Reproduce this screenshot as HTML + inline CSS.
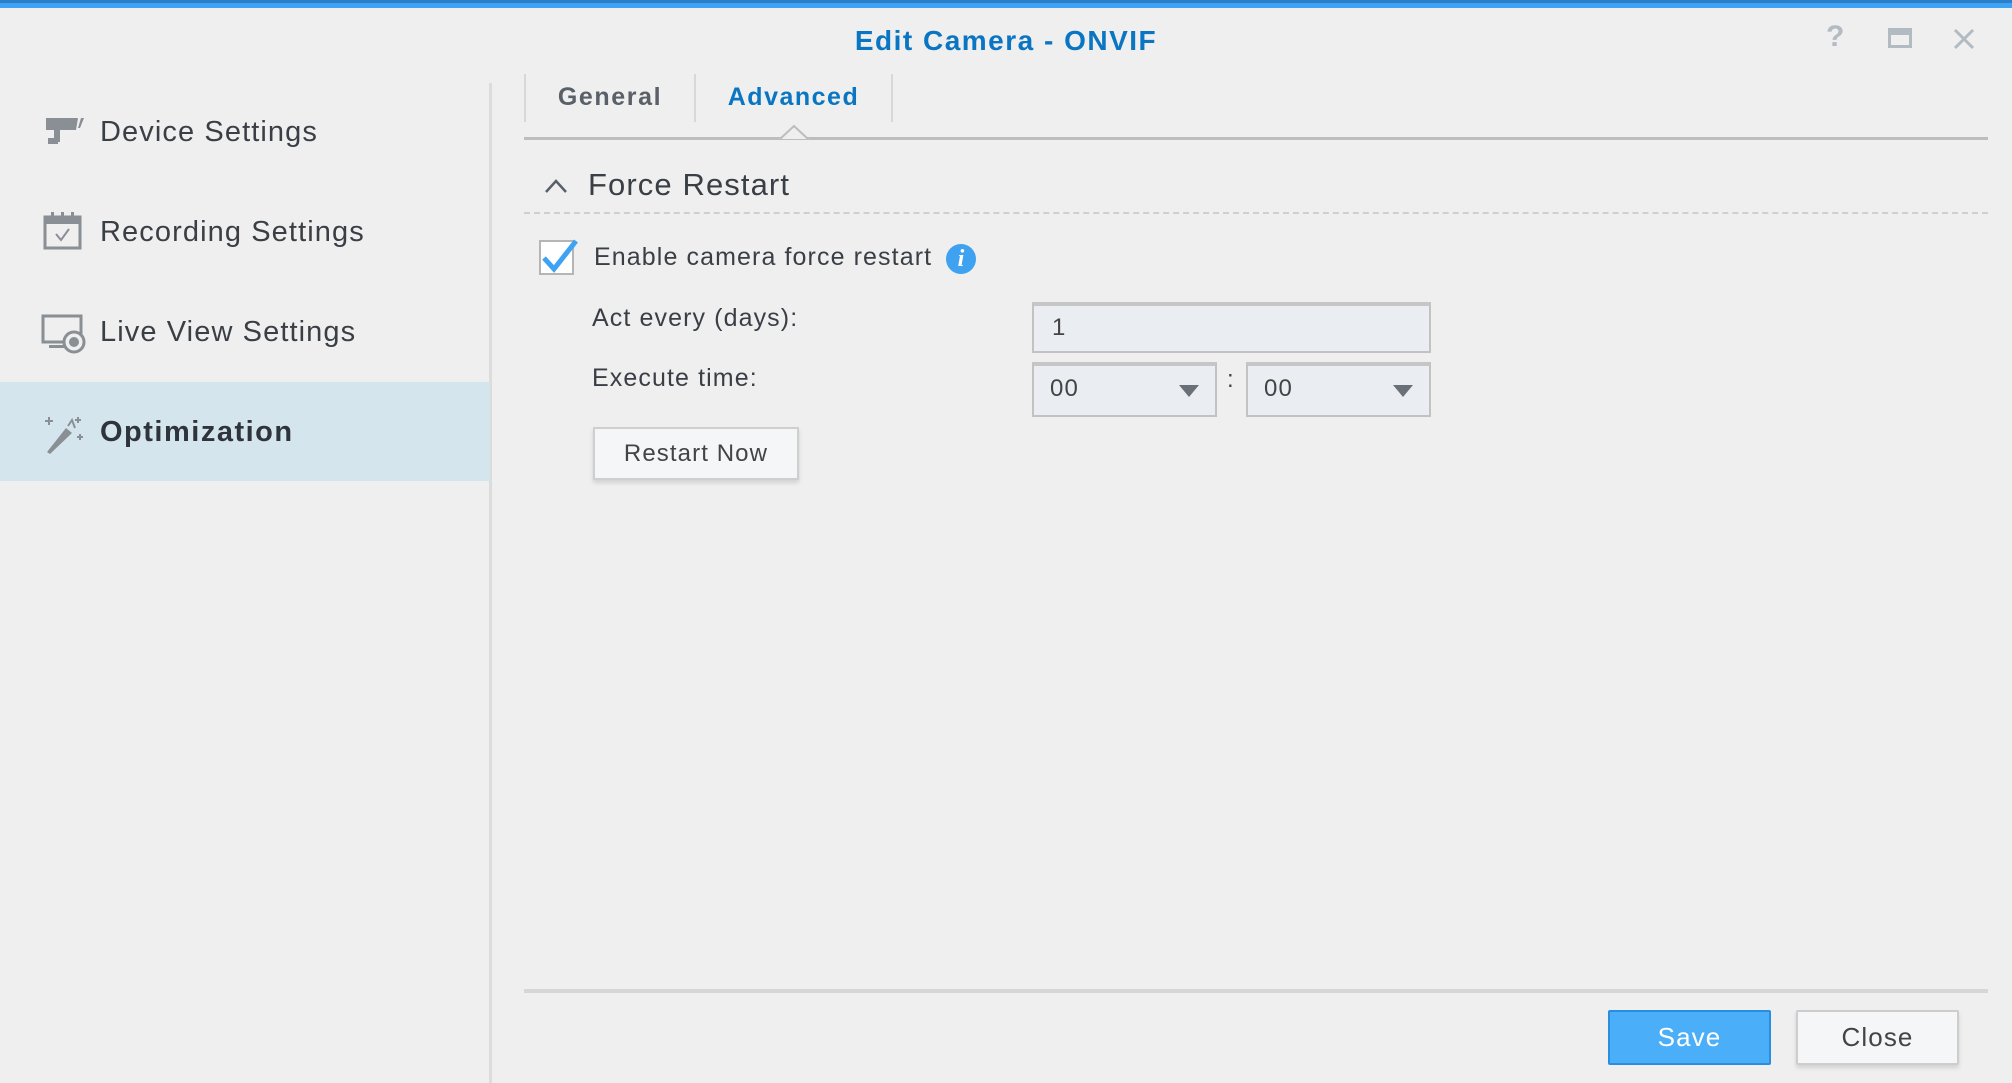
<!DOCTYPE html>
<html><head><meta charset="utf-8"><style>
*{margin:0;padding:0;box-sizing:border-box}
body{width:2012px;height:1082px;background:#efefef;font-family:"Liberation Sans",sans-serif;position:relative;overflow:hidden;color:#3a3f45;letter-spacing:1.1px}
.a{position:absolute;white-space:nowrap}
.side{font-size:29px;color:#3a3f45;line-height:34px}
</style></head><body>
<div class="a" style="left:0;top:0;width:2012px;height:3px;background:#2a7fc8"></div>
<div class="a" style="left:0;top:3px;width:2012px;height:5px;background:#3ea2f5"></div>
<div class="a" style="left:0;top:24px;width:2012px;text-align:center;font-size:28px;font-weight:bold;color:#0a75c2;line-height:34px;letter-spacing:1.5px">Edit Camera - ONVIF</div>
<div class="a" style="left:1826px;top:20px;font-size:30px;font-weight:bold;color:#b2bac2;line-height:34px">?</div>
<div class="a" style="left:1888px;top:28px;width:24px;height:20px;border:3px solid #b2bac2;border-top-width:7px"></div>
<svg class="a" style="left:1952px;top:27px" width="24" height="24"><path d="M3 3L21 21M21 3L3 21" stroke="#b2bac2" stroke-width="3"/></svg>

<div class="a" style="left:489px;top:83px;width:3px;height:1000px;background:#dcdcdc"></div>
<div class="a" style="left:0;top:382px;width:490px;height:99px;background:#d5e5ee"></div>
<svg class="a" style="left:44px;top:116px" width="44" height="34"><path d="M2 2H34L32 14H2Z" fill="#8a8f95"/><path d="M37 2L40 2L36 12L34 12Z" fill="#8a8f95"/><rect x="10" y="14" width="6" height="12" fill="#8a8f95"/><rect x="4" y="22" width="10" height="6" fill="#8a8f95"/></svg>
<div class="a side" style="left:100px;top:115px">Device Settings</div>
<svg class="a" style="left:43px;top:210px" width="40" height="40"><rect x="2" y="7" width="35" height="31" fill="none" stroke="#8a8f95" stroke-width="3"/><rect x="2" y="7" width="35" height="7" fill="#8a8f95"/><rect x="8" y="2" width="3" height="8" fill="#8a8f95"/><rect x="18" y="2" width="3" height="8" fill="#8a8f95"/><rect x="28" y="2" width="3" height="8" fill="#8a8f95"/><path d="M13 24L18 30L26 19" fill="none" stroke="#8a8f95" stroke-width="2"/></svg>
<div class="a side" style="left:100px;top:215px">Recording Settings</div>
<svg class="a" style="left:41px;top:314px" width="46" height="40"><rect x="2" y="2" width="38" height="26" fill="none" stroke="#8a8f95" stroke-width="3"/><rect x="8" y="31" width="20" height="3" fill="#8a8f95"/><circle cx="33" cy="28" r="10" fill="#efefef" stroke="#8a8f95" stroke-width="3"/><circle cx="33" cy="28" r="5" fill="#8a8f95"/></svg>
<div class="a side" style="left:100px;top:315px">Live View Settings</div>
<svg class="a" style="left:42px;top:414px" width="46" height="40"><path d="M5 38L24 14L30 19L8 40Z" fill="#8a8f95"/><path d="M7 3V11M3 7H11M36 3V9M33 6H39M38 20V26M35 23H41" stroke="#8a8f95" stroke-width="2"/><path d="M26 12L30 6L33 14" fill="none" stroke="#8a8f95" stroke-width="2"/></svg>
<div class="a side" style="left:100px;top:415px;font-weight:bold;color:#2f343a;letter-spacing:1.5px">Optimization</div>

<div class="a" style="left:524px;top:74px;width:2px;height:48px;background:#d8d8d8"></div>
<div class="a" style="left:694px;top:74px;width:2px;height:48px;background:#d8d8d8"></div>
<div class="a" style="left:891px;top:74px;width:2px;height:48px;background:#d8d8d8"></div>
<div class="a" style="left:526px;top:80px;width:168px;text-align:center;font-size:25px;font-weight:bold;color:#5a6068;line-height:34px;letter-spacing:1.6px">General</div>
<div class="a" style="left:696px;top:80px;width:195px;text-align:center;font-size:25px;font-weight:bold;color:#0a75c2;line-height:34px;letter-spacing:1.5px">Advanced</div>
<div class="a" style="left:524px;top:137px;width:1464px;height:3px;background:#bdbdbd"></div>
<svg class="a" style="left:779px;top:124px" width="30" height="18"><path d="M0 15L15 2L30 15Z" fill="#efefef"/><path d="M1 15L15 2L29 15" fill="none" stroke="#bdbdbd" stroke-width="2"/></svg>

<svg class="a" style="left:543px;top:177px" width="26" height="18"><path d="M3 15L13 4L23 15" fill="none" stroke="#5a6068" stroke-width="2.5"/></svg>
<div class="a" style="left:588px;top:166px;font-size:31px;color:#3a3f45;line-height:38px">Force Restart</div>
<div class="a" style="left:524px;top:212px;width:1464px;border-top:2px dashed #cfcfcf"></div>

<div class="a" style="left:539px;top:240px;width:35px;height:35px;border:2px solid #b5b5b5;background:#fff"></div>
<svg class="a" style="left:540px;top:238px" width="40" height="36"><path d="M4 20L14 31L36 3" fill="none" stroke="#3ea2f5" stroke-width="5"/></svg>
<div class="a" style="left:594px;top:241px;font-size:25px;line-height:32px">Enable camera force restart</div>
<div class="a" style="left:946px;top:244px;width:30px;height:30px;border-radius:50%;background:#3ea2f0;color:#fff;font-family:'Liberation Serif',serif;font-style:italic;font-weight:bold;font-size:24px;text-align:center;line-height:30px;letter-spacing:0">i</div>

<div class="a" style="left:592px;top:302px;font-size:25px;line-height:32px">Act every (days):</div>
<div class="a" style="left:1032px;top:302px;width:399px;height:51px;background:#eaeef2;border:2px solid #c2c2c2;border-top:4px solid #c6c6c6;font-size:24px;padding-left:18px;line-height:44px;color:#444">1</div>

<div class="a" style="left:592px;top:362px;font-size:25px;line-height:32px">Execute time:</div>
<div class="a" style="left:1032px;top:362px;width:185px;height:55px;background:#eaeef2;border:2px solid #c2c2c2;border-top:4px solid #c6c6c6;font-size:24px;padding-left:16px;line-height:46px;color:#444">00</div>
<svg class="a" style="left:1178px;top:384px" width="22" height="14"><path d="M1 1H21L11 13Z" fill="#6a7077"/></svg>
<div class="a" style="left:1227px;top:366px;font-size:24px;color:#444">:</div>
<div class="a" style="left:1246px;top:362px;width:185px;height:55px;background:#eaeef2;border:2px solid #c2c2c2;border-top:4px solid #c6c6c6;font-size:24px;padding-left:16px;line-height:46px;color:#444">00</div>
<svg class="a" style="left:1392px;top:384px" width="22" height="14"><path d="M1 1H21L11 13Z" fill="#6a7077"/></svg>

<div class="a" style="left:593px;top:427px;width:206px;height:53px;background:#f5f6f8;border:2px solid #cfcfcf;box-shadow:0 3px 4px rgba(0,0,0,.12);text-align:center;font-size:24px;line-height:49px;color:#444">Restart Now</div>

<div class="a" style="left:524px;top:989px;width:1464px;height:4px;background:#d6d6d6"></div>
<div class="a" style="left:1608px;top:1010px;width:163px;height:55px;background:#4aaef8;border:2px solid #2a8ee0;border-radius:2px;text-align:center;font-size:26px;line-height:51px;color:#fff">Save</div>
<div class="a" style="left:1796px;top:1010px;width:163px;height:55px;background:#f5f6f8;border:2px solid #cdcdcd;border-radius:2px;box-shadow:0 3px 4px rgba(0,0,0,.12);text-align:center;font-size:26px;line-height:51px;color:#444">Close</div>
</body></html>
